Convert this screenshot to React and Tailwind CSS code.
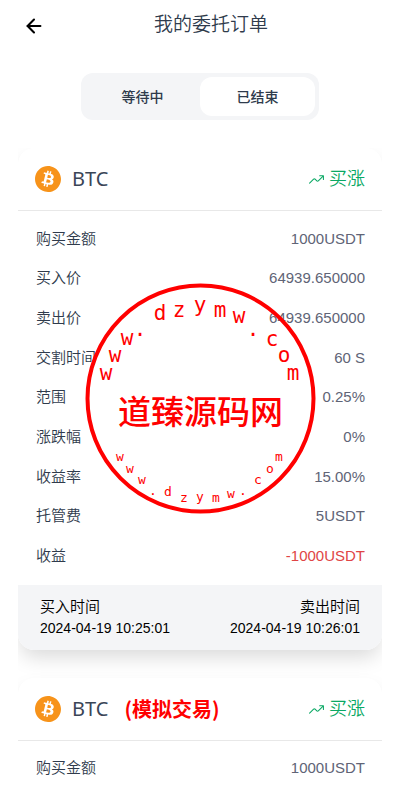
import React, { useState } from 'react';
import { ArrowLeft } from 'lucide-react';
import { SiBitcoin } from 'react-icons/si';
import { IoTrendingUpOutline } from 'react-icons/io5';

const TABS = ['等待中', '已结束'];

const ORDERS = [
    {
        id: 1,
        symbol: 'BTC',
        demo: false,
        rows: [
            { label: '购买金额', value: '1000USDT' },
            { label: '买入价', value: '64939.650000' },
            { label: '卖出价', value: '64939.650000' },
            { label: '交割时间', value: '60 S' },
            { label: '范围', value: '0.25%' },
            { label: '涨跌幅', value: '0%' },
            { label: '收益率', value: '15.00%' },
            { label: '托管费', value: '5USDT' },
            { label: '收益', value: '-1000USDT', loss: true },
        ],
        times: [
            { label: '买入时间', value: '2024-04-19 10:25:01' },
            { label: '卖出时间', value: '2024-04-19 10:26:01' },
        ],
    },
    {
        id: 2,
        symbol: 'BTC',
        demo: true,
        rows: [{ label: '购买金额', value: '1000USDT' }],
    },
];

// [letter, x, baseline]
const STAMP_TOP = [
    ['w', 106, 380], ['w', 115, 362], ['w', 127, 345], ['.', 140, 336], ['d', 160, 320],
    ['z', 179, 317], ['y', 200, 312], ['m', 220, 317], ['w', 239, 323], ['.', 253, 336],
    ['c', 272, 346], ['o', 284, 362], ['m', 293, 380],
];
const STAMP_BOTTOM = [
    ['w', 120, 461], ['w', 130, 473], ['w', 142, 484], ['.', 153, 495], ['d', 168, 496],
    ['z', 184, 502], ['y', 200, 501], ['m', 216, 502], ['w', 231, 498], ['.', 243, 495],
    ['c', 258, 484], ['o', 270, 473], ['m', 279, 461],
];

const Stamp = () => (
    <svg
        viewBox="84 282 233 233"
        className="pointer-events-none absolute inset-x-0 top-[282px] mx-auto w-[233px] h-[233px]"
        fill="#ff0000"
        textAnchor="middle"
    >
        <circle cx="200.5" cy="398.5" r="113" fill="none" stroke="#ff0000" strokeWidth="4" />
        <g className="font-['DejaVu_Sans_Mono',monospace] text-[21px]">
            {STAMP_TOP.map(([c, x, y]) => <text key={x} x={x} y={y}>{c}</text>)}
        </g>
        <text x="200.5" y="424" className="font-['Noto_Sans_CJK_SC',sans-serif] text-[33px] font-medium">道臻源码网</text>
        <g className="font-['DejaVu_Sans_Mono',monospace] text-[13px]">
            {STAMP_BOTTOM.map(([c, x, y]) => <text key={x} x={x} y={y}>{c}</text>)}
        </g>
    </svg>
);

const OrderCard = ({ order }) => (
    <article className={`flex flex-col bg-white shadow-[0_10px_20px_-3px_rgba(0,0,0,0.15)] ${order.times ? 'min-h-[502px] rounded-2xl' : 'rounded-t-2xl'}`}>
        <div className="flex items-center justify-between h-[63px] px-[17px] border-b border-[#e8e8e8]">
            <div className="flex items-center">
                <SiBitcoin size={26} className="text-[#f7931a]" />
                <h2 className="ml-[11px] font-['Noto_Sans','Noto_Sans_CJK_SC',sans-serif] text-xl text-[#3a4557]">
                    {order.symbol}
                </h2>
                {order.demo && (
                    <span className="ml-4 font-['Noto_Sans_CJK_SC',sans-serif] text-xl font-bold text-[#ff0000]">
                        (模拟交易)
                    </span>
                )}
            </div>
            <div className="flex items-center gap-1 text-[#0aa864]">
                <IoTrendingUpOutline size={17} />
                <span className="text-lg font-[350]">买涨</span>
            </div>
        </div>

        <dl className="flex-1 grid auto-rows-fr pl-[18px] pr-[17px] pt-2 pb-[9px] text-[15px]">
            {order.rows.map(({ label, value, loss }) => (
                <div key={label} className="flex items-center justify-between min-h-[39px]">
                    <dt className="font-[350] text-[#2f3b4c]">{label}</dt>
                    <dd className={loss ? 'text-[#e04545]' : 'text-[#606476]'}>{value}</dd>
                </div>
            ))}
        </dl>

        {order.times && (
            <div className="flex justify-between px-[22px] py-[11px] rounded-b-2xl bg-[#f4f5f7] text-black">
                {order.times.map(({ label, value }) => (
                    <div key={label} className="last:text-right">
                        <p className="text-[15px] leading-[22px] font-[350]">{label}</p>
                        <p className="text-sm leading-[21px]">{value}</p>
                    </div>
                ))}
            </div>
        )}
    </article>
);

const App = () => {
    const [tab, setTab] = useState(TABS[1]);

    return (
        <div className="relative h-screen overflow-hidden bg-white pr-px font-['Liberation_Sans','Noto_Sans_CJK_SC',sans-serif]">
            <header className="flex items-center h-[51px] px-[23px]">
                <button type="button" aria-label="返回" className="text-black">
                    <ArrowLeft size={22} strokeWidth={2.25} />
                </button>
                <h1 className="flex-1 text-center text-[19px] font-[350] text-[#2f3b4c]">我的委托订单</h1>
            </header>

            <nav className="flex w-[238px] mx-auto mt-[22px] p-1 rounded-xl bg-[#f4f5f7]">
                {TABS.map((name) => (
                    <button
                        key={name}
                        type="button"
                        onClick={() => setTab(name)}
                        className={`flex-1 h-[39px] rounded-xl text-sm font-medium text-[#2f3b4c] ${tab === name ? 'bg-white' : ''}`}
                    >
                        {name}
                    </button>
                ))}
            </nav>

            <main className="mx-[18px] mt-[28px] flex flex-col gap-7 overflow-hidden">
                {ORDERS.map((order) => <OrderCard key={order.id} order={order} />)}
            </main>

            <Stamp />
        </div>
    );
};

export default App;
